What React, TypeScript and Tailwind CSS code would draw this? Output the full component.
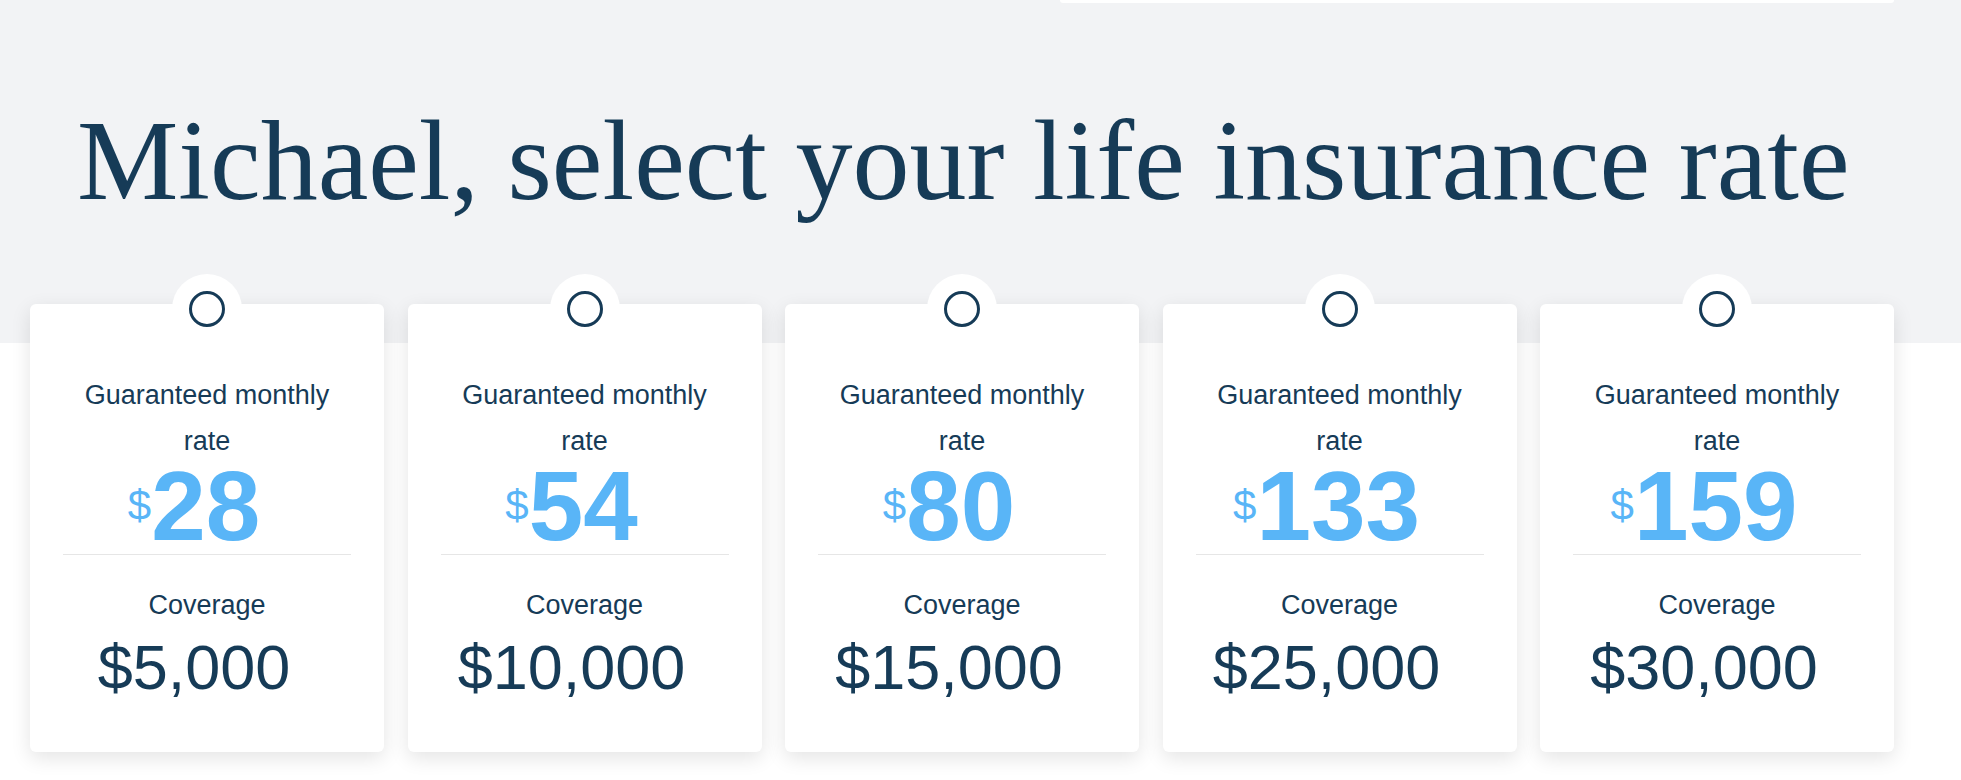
const plans = [
  { rate: "28", coverage: "$5,000" },
  { rate: "54", coverage: "$10,000" },
  { rate: "80", coverage: "$15,000" },
  { rate: "133", coverage: "$25,000" },
  { rate: "159", coverage: "$30,000" },
];

function RateCard({ rate, coverage }: { rate: string; coverage: string }) {
  return (
    <div className="relative bg-white rounded-[6px] shadow-[0_6px_20px_rgba(0,0,0,0.11)] pt-[68px] pb-[53px] text-[#163b57] font-['Liberation_Sans',Arial,sans-serif]">
      {/* radio tab */}
      <div className="absolute top-[-30px] left-1/2 -translate-x-1/2 w-[70px] h-[70px] rounded-full bg-white flex items-center justify-center">
        <div className="w-[36px] h-[36px] rounded-full border-[3px] border-[#163b57]" />
      </div>

      <p className="px-[40px] text-center text-[27px] leading-[46px]">Guaranteed monthly rate</p>

      <div className="pr-[26px] text-center text-[98px] leading-[84px] text-[#59b5f7]">
        <span className="text-[42px] leading-none align-[20px]">$</span>
        <span className="font-bold">{rate}</span>
      </div>

      <div className="mt-[6px] mx-[33px] h-px bg-[#e6e6e6]" />

      <p className="mt-[27px] text-center text-[27px] leading-[46px]">Coverage</p>
      <p className="mt-[7px] pr-[26px] text-center text-[63px] leading-[64px]">{coverage}</p>
    </div>
  );
}

export default function App() {
  return (
    <div className="w-[1961px] h-[780px] overflow-hidden bg-[linear-gradient(to_bottom,#f2f3f5_343px,#ffffff_343px)]">
      <div className="ml-[1060px] w-[834px] h-[3px] bg-white rounded-b-[3px]" />

      <h1 className="mt-[101px] pl-[77px] text-[114px] leading-[114px] text-[#163b57] font-['Liberation_Serif','Times_New_Roman',serif]">
        Michael, select your life insurance rate
      </h1>

      <div className="mt-[86px] ml-[30px] w-[1864px] grid grid-cols-5 gap-[23.5px]">
        {plans.map((p) => (
          <RateCard key={p.rate} rate={p.rate} coverage={p.coverage} />
        ))}
      </div>
    </div>
  );
}
